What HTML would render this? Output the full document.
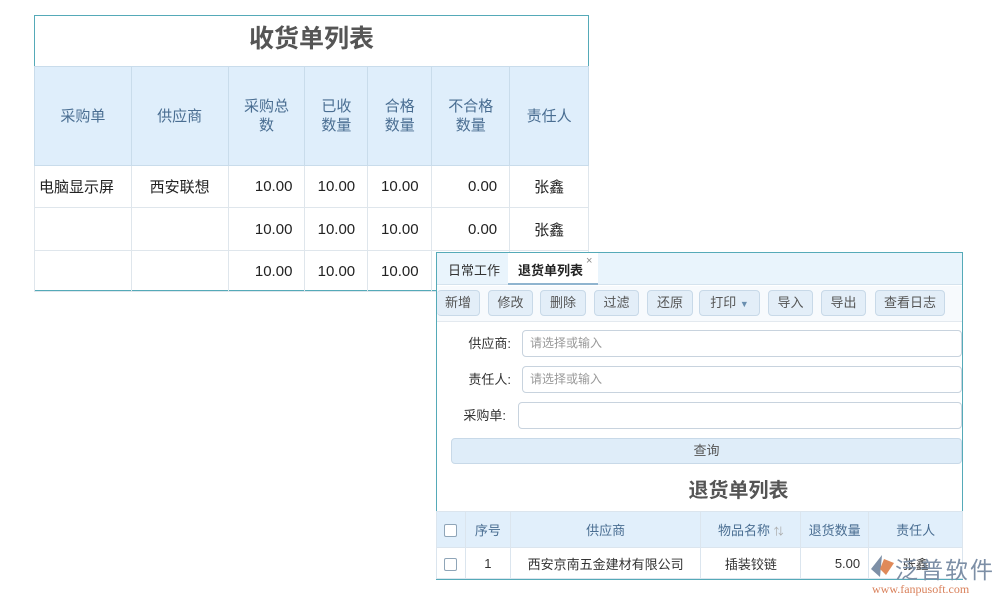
<!DOCTYPE html>
<html><head><meta charset="utf-8"><style>
*{box-sizing:border-box;margin:0;padding:0}
body{width:1000px;height:600px;background:#fff;position:relative;overflow:hidden;font-family:"Liberation Sans","Noto Sans CJK SC",sans-serif;color:#333}
.a{position:absolute}
table{border-collapse:collapse;position:absolute}
.t1 td{border:1px solid #dfe6ec;text-align:center;font-size:15px;color:#222}
.t1 .h td{background:#dfeefb;color:#4a6e92;border-color:#c9dceb;line-height:19px}
.t1 .r{text-align:right;padding-right:12px}
.btn{position:absolute;top:290px;height:26px;border:1px solid #c8d9e8;border-radius:4px;background:#e3eef8;font-size:13px;color:#555;text-align:center;line-height:24px}
.lab{position:absolute;font-size:13px;color:#333;text-align:right;width:60px}
.inp{position:absolute;height:27px;border:1px solid #c8d3de;border-radius:4px;font-size:12px;color:#999;padding-left:7px;line-height:25px;background:#fff}
.t2 td{border:1px solid #dbe5ee;text-align:center;font-size:13px;color:#333;height:31px}
.t2 .h td{background:#e1effb;color:#4a6e92;height:36px}
.cb{display:inline-block;width:13px;height:13px;border:1px solid #8fa5b8;border-radius:2px;background:#fff;vertical-align:middle}
</style></head><body>
<div class="a" style="left:34px;top:15px;width:555px;height:276px;border:1px solid #55aab8"></div>
<div class="a" style="left:35px;top:16px;width:553px;height:50px;text-align:center;font-size:25px;font-weight:bold;color:#555;line-height:46px">收货单列表</div>
<table class="t1" style="left:34px;top:66px;width:555px">
<colgroup><col width="97"><col width="97"><col width="77"><col width="63"><col width="64"><col width="78"><col width="79"></colgroup>
<tr class="h" style="height:99px"><td>采购单</td><td>供应商</td><td>采购总<br>数</td><td>已收<br>数量</td><td>合格<br>数量</td><td>不合格<br>数量</td><td>责任人</td></tr>
<tr style="height:42px"><td style="text-align:left;padding-left:4px">电脑显示屏</td><td>西安联想</td><td class="r">10.00</td><td>10.00</td><td>10.00</td><td class="r">0.00</td><td>张鑫</td></tr>
<tr style="height:43px"><td></td><td></td><td class="r">10.00</td><td>10.00</td><td>10.00</td><td class="r">0.00</td><td>张鑫</td></tr>
<tr style="height:41px"><td></td><td></td><td class="r">10.00</td><td>10.00</td><td>10.00</td><td class="r"></td><td></td></tr>
</table>

<div class="a" style="left:436px;top:252px;width:527px;height:328px;border:1px solid #55aab8;background:#fff"></div>
<div class="a" style="left:437px;top:253px;width:525px;height:32px;background:#e9f4fc;border-bottom:1px solid #d5e3ee"></div>
<div class="a" style="left:448px;top:260px;font-size:13px;color:#333">日常工作</div>
<div class="a" style="left:508px;top:253px;width:90px;height:32px;background:#fff;border-bottom:2px solid #8fb4cf"></div>
<div class="a" style="left:518px;top:260px;font-size:13px;color:#222;font-weight:bold">退货单列表</div>
<div class="a" style="left:586px;top:255px;font-size:11px;color:#888">×</div>
<div class="a" style="left:437px;top:286px;width:525px;height:36px;background:#f7fafd;border-bottom:1px solid #e3e9ef"></div>
<div class="btn" style="left:437px;width:43px;border-left:none">新增</div>
<div class="btn" style="left:488px;width:45px">修改</div>
<div class="btn" style="left:540px;width:46px">删除</div>
<div class="btn" style="left:594px;width:45px">过滤</div>
<div class="btn" style="left:647px;width:46px">还原</div>
<div class="btn" style="left:699px;width:61px">打印 <span style="font-size:9px;color:#6a8fb0">▼</span></div>
<div class="btn" style="left:768px;width:45px">导入</div>
<div class="btn" style="left:821px;width:45px">导出</div>
<div class="btn" style="left:875px;width:70px">查看日志</div>
<div class="lab" style="left:451px;top:333px">供应商:</div>
<div class="inp" style="left:522px;top:330px;width:440px">请选择或输入</div>
<div class="lab" style="left:451px;top:369px">责任人:</div>
<div class="inp" style="left:522px;top:366px;width:440px">请选择或输入</div>
<div class="lab" style="left:446px;top:405px">采购单:</div>
<div class="inp" style="left:518px;top:402px;width:444px"></div>
<div class="a" style="left:451px;top:438px;width:511px;height:26px;background:#dfedf9;border:1px solid #c8d9e8;border-radius:4px;text-align:center;font-size:13px;color:#555;line-height:24px">查询</div>
<div class="a" style="left:437px;top:474px;text-align:center;font-size:20px;font-weight:bold;color:#555;width:603px">退货单列表</div>
<table class="t2" style="left:436px;top:511px;width:527px">
<colgroup><col width="29"><col width="45"><col width="191"><col width="100"><col width="68"><col width="94"></colgroup>
<tr class="h"><td><span class="cb"></span></td><td>序号</td><td>供应商</td><td>物品名称 <span style="font-size:10px;color:#aaa">⇅</span></td><td>退货数量</td><td>责任人</td></tr>
<tr><td><span class="cb"></span></td><td>1</td><td>西安京南五金建材有限公司</td><td>插装铰链</td><td style="text-align:right;padding-right:8px">5.00</td><td>张鑫</td></tr>
</table>
<svg class="a" style="left:868px;top:553px" width="28" height="26" viewBox="0 0 28 26"><path d="M14 2 L3 16 L12 24 Z" fill="#7d8fa6"/><path d="M16 6 L26 10 L18 22 L12 16 Z" fill="#e08a5a"/></svg>
<div class="a" style="left:895px;top:551px;font-size:23px;color:#7d8fa6;letter-spacing:2px">泛普软件</div>
<div class="a" style="left:872px;top:582px;font-size:12px;color:#d9805a;font-family:'Liberation Serif',serif">www.fanpusoft.com</div>
</body></html>
